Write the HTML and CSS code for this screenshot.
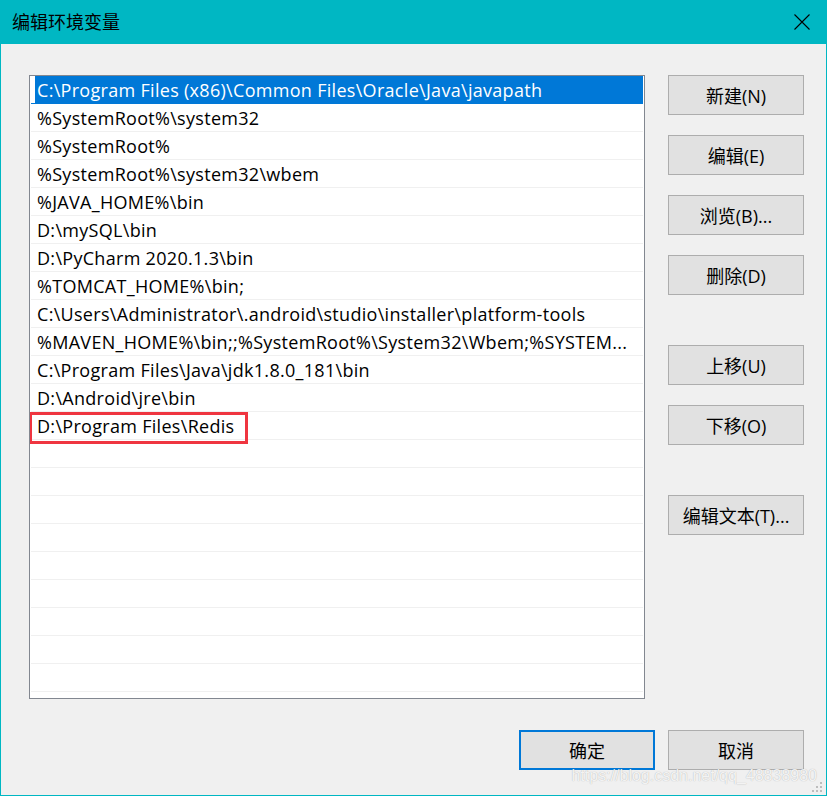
FILE: index.html
```html
<!DOCTYPE html>
<html lang="zh-CN">
<head>
  <meta charset="UTF-8">
  <title>编辑环境变量</title>
  <link rel="stylesheet" href="styles.css">
</head>
<body>

<div class="window">
  <!-- 标题栏 -->
  <div class="titlebar">
    <span class="title">编辑环境变量</span>
    <svg class="close" width="16" height="16" viewBox="0 0 16 16">
      <path d="M0.5 0.5 L15.5 15.5 M15.5 0.5 L0.5 15.5" stroke="#000" stroke-width="1.1" fill="none"/>
    </svg>
  </div>

  <div class="content">
    <div class="main">
      <div class="list">
        <div class="row selected">C:\Program Files (x86)\Common Files\Oracle\Java\javapath</div>
        <div class="row">%SystemRoot%\system32</div>
        <div class="row">%SystemRoot%</div>
        <div class="row">%SystemRoot%\system32\wbem</div>
        <div class="row">%JAVA_HOME%\bin</div>
        <div class="row">D:\mySQL\bin</div>
        <div class="row">D:\PyCharm 2020.1.3\bin</div>
        <div class="row">%TOMCAT_HOME%\bin;</div>
        <div class="row">C:\Users\Administrator\.android\studio\installer\platform-tools</div>
        <div class="row">%MAVEN_HOME%\bin;;%SystemRoot%\System32\Wbem;%SYSTEM...</div>
        <div class="row">C:\Program Files\Java\jdk1.8.0_181\bin</div>
        <div class="row">D:\Android\jre\bin</div>
        <div class="row marked">D:\Program Files\Redis<span class="mark"></span></div>
        <div class="row"></div>
        <div class="row"></div>
        <div class="row"></div>
        <div class="row"></div>
        <div class="row"></div>
        <div class="row"></div>
        <div class="row"></div>
        <div class="row"></div>
        <div class="row"></div>
      </div>

      <div class="side">
        <button class="btn">新建(N)</button>
        <button class="btn">编辑(E)</button>
        <button class="btn">浏览(B)...</button>
        <button class="btn">删除(D)</button>
        <button class="btn group">上移(U)</button>
        <button class="btn">下移(O)</button>
        <button class="btn group">编辑文本(T)...</button>
      </div>
    </div>

    <div class="footer">
      <button class="btn default">确定</button>
      <button class="btn">取消</button>
    </div>
  </div>

  <div class="watermark">https://blog.csdn.net/qq_48838980</div>
  <svg class="grip" width="10" height="10" viewBox="0 0 10 10">
    <rect x="8" y="0" width="2" height="2" fill="#bdbdbd"/>
    <rect x="4" y="4" width="2" height="2" fill="#bdbdbd"/>
    <rect x="8" y="4" width="2" height="2" fill="#bdbdbd"/>
    <rect x="0" y="8" width="2" height="2" fill="#bdbdbd"/>
    <rect x="4" y="8" width="2" height="2" fill="#bdbdbd"/>
    <rect x="8" y="8" width="2" height="2" fill="#bdbdbd"/>
  </svg>
</div>

</body>
</html>
```

FILE: styles.css
```css
body {
  margin: 0;
  font-family: "Open Sans", "Noto Sans CJK SC", sans-serif;
  font-size: 18px;
  color: #000;
}
.window {
  position: relative;
  width: 827px;
  height: 796px;
  box-sizing: border-box;
  background-color: #F0F0F0;
  border: 1px solid #00B7C3;
  border-top: none;
}
.titlebar {
  height: 44px;
  margin: 0 -1px;
  background-color: #00B7C3; /* color de acento de Windows */
  display: flex;
  align-items: center;
  justify-content: space-between;
  padding: 0 17px 0 12px;
}
.title {
  font-family: "Noto Sans CJK SC", sans-serif;
  font-size: 18px;
  margin-top: -2px;
}
.close {
  margin-top: -1px;
}
.content {
  padding: 31px 22px 0 28px;
}
.main {
  display: flex;
  gap: 23px;
}
.list {
  width: 616px;
  height: 624px;
  box-sizing: border-box;
  border: 1px solid #828790;
  background: #fff;
  padding: 0 1px;
  overflow: hidden;
}
.row {
  position: relative;
  height: 28px;
  box-sizing: border-box;
  border-bottom: 1px solid #F0F0F0;
  padding: 2px 6px 0;
  line-height: 25px;
  letter-spacing: 0.3px;
  white-space: nowrap;
}
.row.selected {
  background: linear-gradient(to right, transparent 4px, #0078D7 4px);
  color: #fff;
  border-bottom-color: #0078D7;
}
.mark {
  position: absolute;
  left: -2px;
  top: 0;
  width: 219px;
  height: 32px;
  box-sizing: border-box;
  border: 3px solid #EF3540;
}
.side {
  display: flex;
  flex-direction: column;
  gap: 20px;
}
.btn {
  width: 136px;
  height: 40px;
  box-sizing: border-box;
  background-color: #E1E1E1;
  border: 1px solid #ADADAD;
  font-family: "Open Sans", "Noto Sans CJK SC", sans-serif;
  font-size: 18px;
  color: #000;
  padding: 0;
}
.btn.group {
  margin-top: 30px;
}
.btn.default {
  border: 2px solid #0078D7;
}
.footer {
  display: flex;
  justify-content: flex-end;
  gap: 13px;
  margin-top: 31px;
}
.watermark {
  position: absolute;
  right: 9px;
  top: 767px;
  font-family: "Liberation Sans", Arial, sans-serif;
  font-size: 16px;
  color: rgba(252, 252, 252, 0.9);
  text-shadow: 0 0 1px rgba(0, 0, 0, 0.3);
}
.grip {
  position: absolute;
  right: 4px;
  bottom: 3px;
}
```
